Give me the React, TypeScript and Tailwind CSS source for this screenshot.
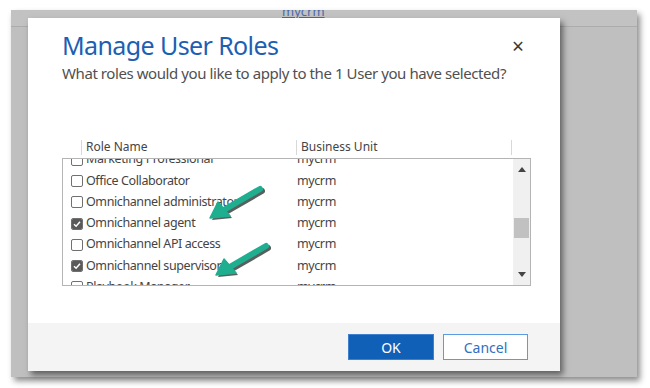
import React from 'react'

const rows = [
  { name: 'Marketing Professional', checked: false },
  { name: 'Office Collaborator', checked: false },
  { name: 'Omnichannel administrator', checked: false },
  { name: 'Omnichannel agent', checked: true },
  { name: 'Omnichannel API access', checked: false },
  { name: 'Omnichannel supervisor', checked: true },
  { name: 'Playbook Manager', checked: false },
]

function Box({ checked }: { checked: boolean }) {
  return (
    <span className="w-[12px] h-[12px] border border-[#707070] rounded-[2px] bg-white flex items-center justify-center shrink-0">
      {checked && (
        <svg width="10" height="10" viewBox="0 0 10 10">
          <rect x="0" y="0" width="10" height="10" rx="1" fill="#5a5a5a" />
          <path d="M2 5.2 L4.1 7.2 L8 2.8" stroke="#fff" strokeWidth="1.5" fill="none" />
        </svg>
      )}
    </span>
  )
}

function Arrow({ className }: { className: string }) {
  return (
    <svg className={className} width="64" height="40" viewBox="0 0 64 40">
      <g transform="translate(2,2)" opacity="0.75">
        <path d="M52 4 L14 26" stroke="#1f2b28" strokeWidth="6" strokeLinecap="round" />
        <path d="M2 33 L10 17 L22 31 Z" fill="#1f2b28" />
      </g>
      <path d="M52 4 L14 26" stroke="#1fae8f" strokeWidth="6" strokeLinecap="round" />
      <path d="M2 33 L10 17 L22 31 Z" fill="#1fae8f" stroke="#1fae8f" strokeWidth="1.5" strokeLinejoin="round" />
    </svg>
  )
}

export default function App() {
  return (
    <div className="w-[650px] h-[388px] bg-white pt-[10px] pl-[11px] font-['Segoe_UI','Noto_Sans',sans-serif]">
      {/* background page */}
      <div className="relative w-[626px] h-[367px] bg-[#bfbfbf] shadow-[3px_4px_6px_rgba(0,0,0,0.45)]">
        <div className="h-[17px] border-b border-[#acacac] bg-[#c2c2c2] overflow-hidden pl-[271px]">
          <span className="block -mt-[8px] text-[13px] leading-[18px] text-[#4a6aa8] underline">mycrm</span>
        </div>

        {/* dialog */}
        <div className="absolute left-[17px] top-[8px] w-[532px] h-[353px] bg-white shadow-[3px_4px_6px_rgba(0,0,0,0.5)] flex flex-col">
          <div className="relative pl-[34px] pt-[10px]">
            <h1 className="text-[25px] leading-[34px] tracking-[-0.6px] text-[#1d5fb3]">Manage User Roles</h1>
            <p className="text-[15px] leading-[20px] tracking-[-0.42px] text-[#505050] mt-[1px]">
              What roles would you like to apply to the 1 User you have selected?
            </p>
            <span className="absolute left-[484px] top-[18px] text-[21px] leading-[20px] text-[#3a3a3a]">×</span>
          </div>

          {/* grid */}
          <div className="relative ml-[34px] mt-[54px] w-[469px]">
            <div className="flex h-[20px] items-center text-[12px] text-[#444]">
              <span className="ml-[19px] h-[15px] border-l border-[#d8d8d8]" />
              <span className="ml-[4px] w-[210px]">Role Name</span>
              <span className="h-[15px] border-l border-[#d8d8d8]" />
              <span className="ml-[4px] w-[210px]">Business Unit</span>
              <span className="h-[15px] border-l border-[#d8d8d8]" />
            </div>
            <div className="mt-[1px] h-[128px] border border-[#b4b4b4] flex overflow-hidden">
              <div className="flex-1 overflow-hidden">
                <div className="-mt-[10px]">
                  {rows.map((r) => (
                    <div key={r.name} className="flex items-center h-[21.3px] text-[12.5px] tracking-[-0.4px] text-[#444]">
                      <span className="ml-[8px]"><Box checked={r.checked} /></span>
                      <span className="ml-[3px] w-[211px] whitespace-nowrap">{r.name}</span>
                      <span>mycrm</span>
                    </div>
                  ))}
                </div>
              </div>
              <div className="w-[17px] bg-[#f0f0f0] flex flex-col items-center">
                <svg className="mt-[8px]" width="8" height="5" viewBox="0 0 8 5"><path d="M0 5 L4 0 L8 5 Z" fill="#444" /></svg>
                <div className="mt-[46px] w-[15px] h-[20px] bg-[#c1c1c1]" />
                <div className="flex-1" />
                <svg className="mb-[8px]" width="8" height="5" viewBox="0 0 8 5"><path d="M0 0 L4 5 L8 0 Z" fill="#444" /></svg>
              </div>
            </div>
            <Arrow className="absolute left-[146px] top-[48px]" />
            <Arrow className="absolute left-[152px] top-[105px]" />
          </div>

          <div className="flex-1" />
          {/* footer */}
          <div className="h-[48px] bg-[#f4f4f4] flex justify-end items-start pt-[11px] pr-[32px] gap-[9px]">
            <button className="w-[86px] h-[26px] bg-[#1160b7] border border-[#3f7fcf] text-white text-[14px]">OK</button>
            <button className="w-[85px] h-[26px] bg-white border border-[#5b9be0] text-[#2f6fc2] text-[14px]">Cancel</button>
          </div>
        </div>
      </div>
    </div>
  )
}
